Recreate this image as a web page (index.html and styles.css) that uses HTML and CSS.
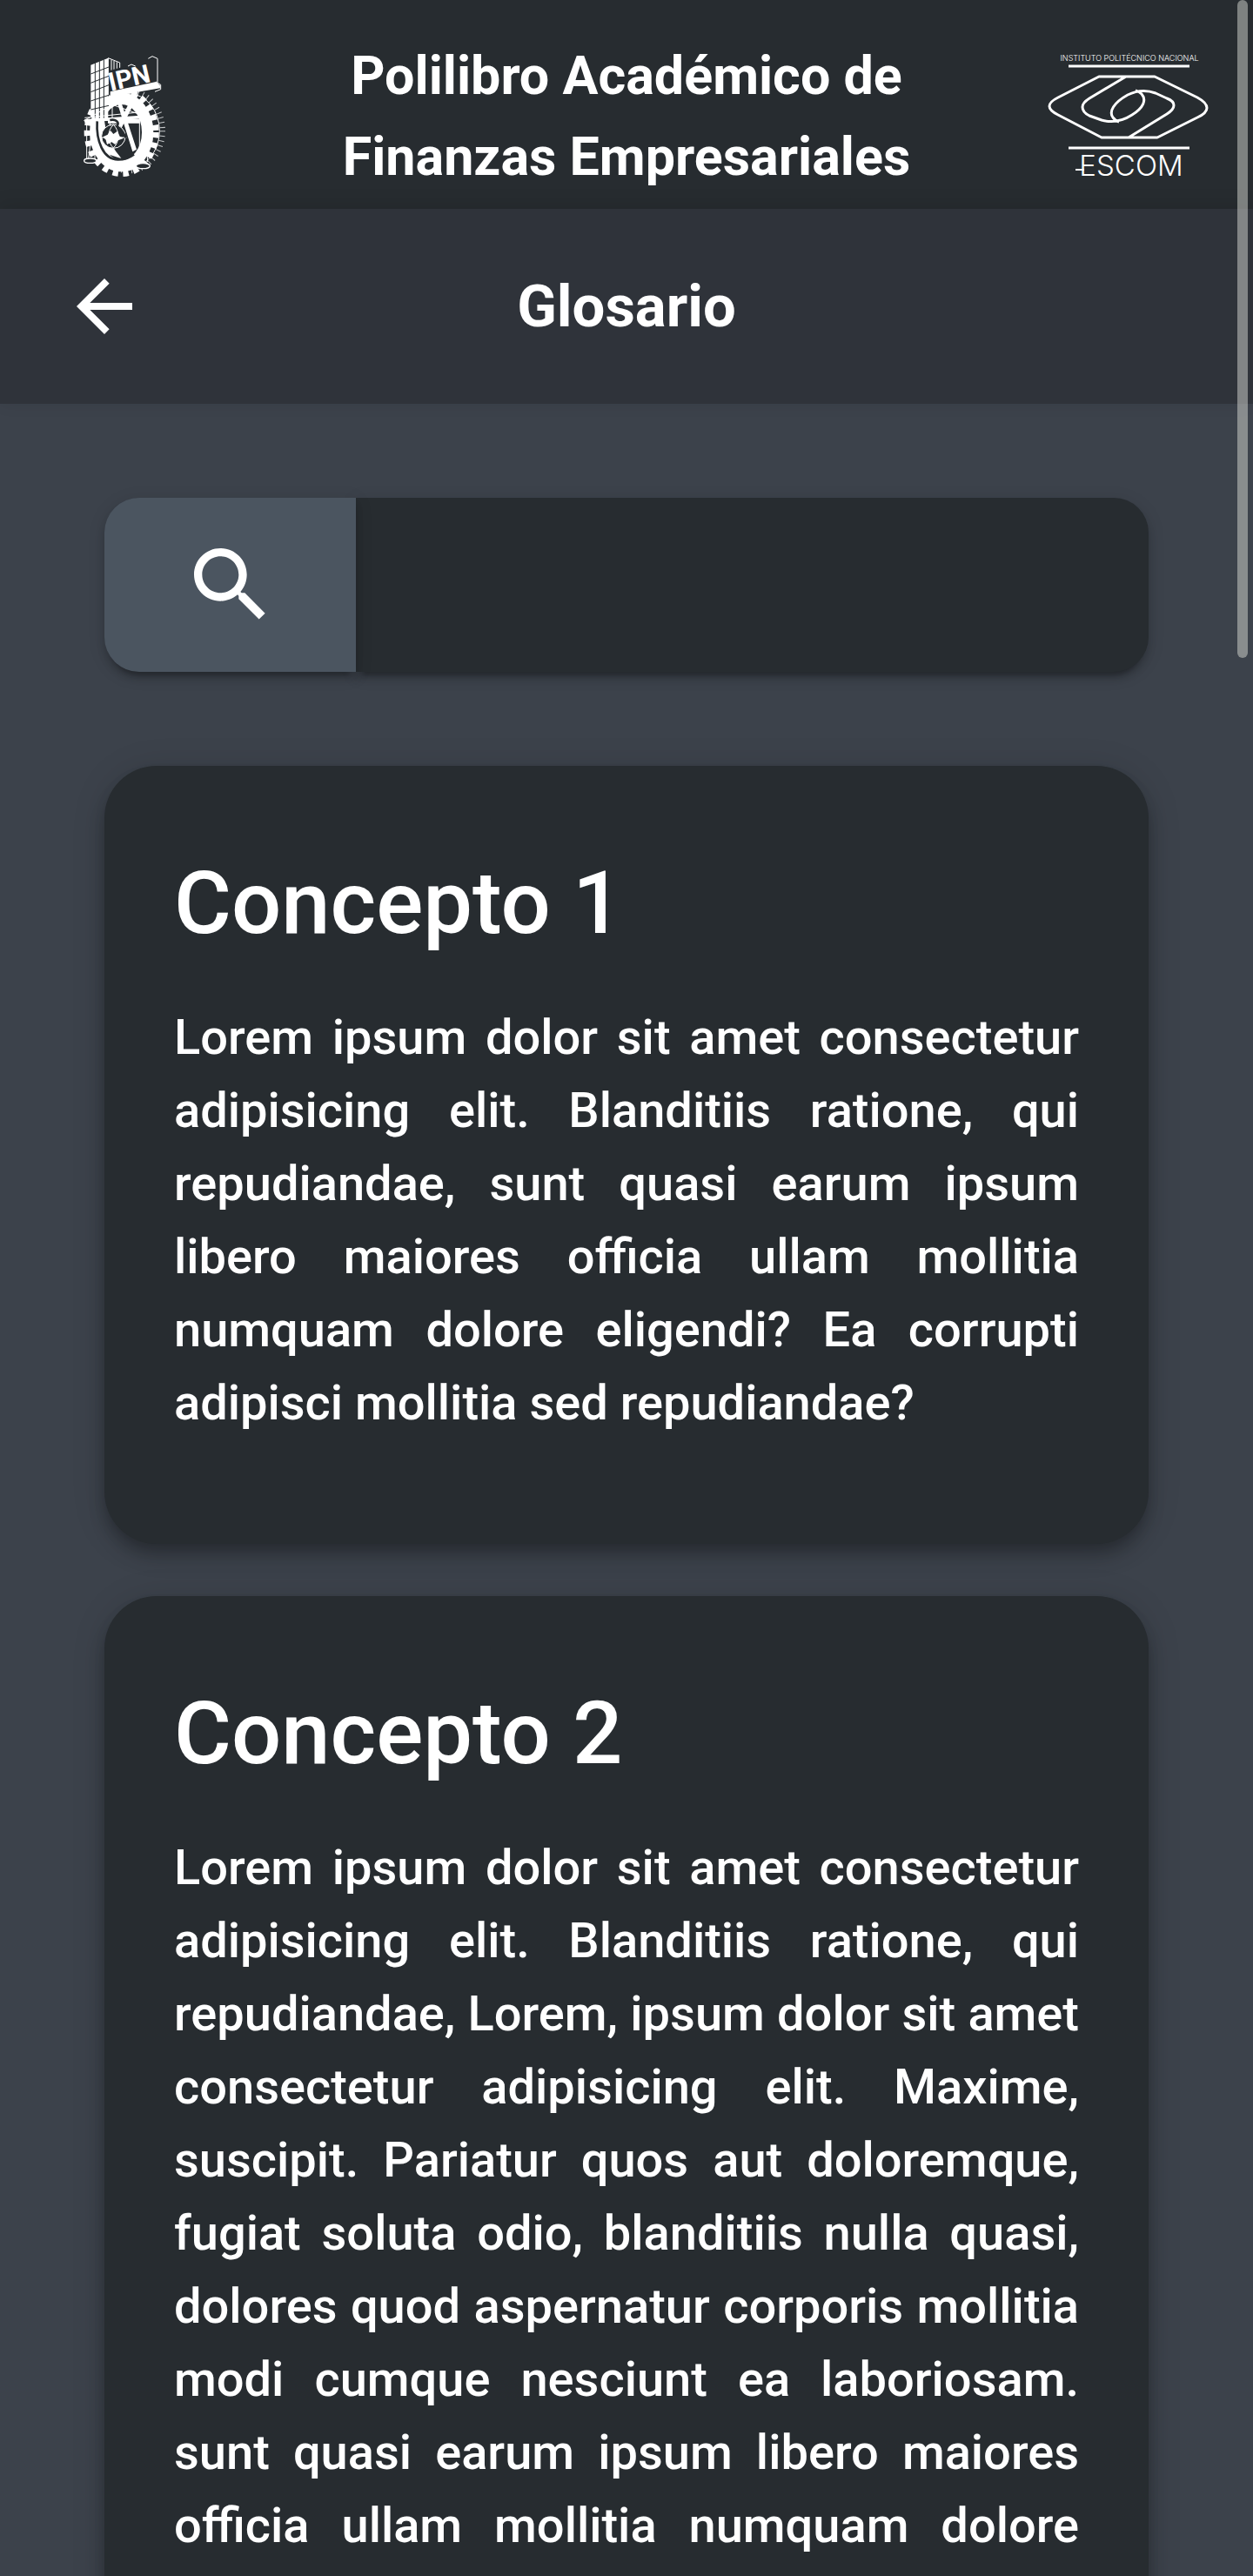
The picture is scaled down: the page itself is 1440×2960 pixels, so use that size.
FILE: index.html
```html
<!DOCTYPE html>
<html lang="es">
<head>
<meta charset="utf-8">
<meta name="viewport" content="width=device-width, initial-scale=1">
<title>Glosario</title>
<link rel="stylesheet" href="styles.css">
</head>
<body>
<div class="app">
  <header class="header">
    <svg class="logo-ipn" viewBox="0 0 390 492" role="img" aria-label="IPN">
      <!-- gear -->
      <ellipse cx="207" cy="295" rx="106" ry="128" class="gear-side"/>
      <ellipse cx="207" cy="295" rx="116" ry="137" class="teeth-side"/>
      <ellipse cx="182" cy="300" rx="90" ry="116" class="gear"/>
      <ellipse cx="182" cy="300" rx="118" ry="142" class="teeth"/>
      <path class="fill" d="M160 175l12-6 62 190-14 8zM226 165l14 6-66 130-12-14zM135 255h110v14H135z"/>
      <path class="fill" d="M92 255h30l10 60 30 50 20 26-60-20z"/>
      <!-- building -->
      <path class="fill" d="M76 68l60-24v210l-60-8z"/>
      <path class="line" d="M136 44l40 16v28M147 50v42M156 54v36M166 58v30M136 44v130"/>
      <path class="cut" d="M91 60v190M106 55v196M121 50v204M76 99l62-24M76 130l62-24M76 161l62-24M76 192l62-20M76 222l62-14"/>
      <!-- lettering on its base -->
      <path class="back-fill" d="M139 88l165-46v84l-165 36z"/>
      <path class="fill" d="M143 160l158-34 14 12v10l-172 30z"/>
      <path class="line" d="M301 126l16 10v16l-20 8M274 46l14-8 18 8v82M204 72l12-6 14 6"/>
      <text class="ipn" x="145" y="158" transform="rotate(-13 145 158)">IPN</text>
      <!-- scales -->
      <path class="line" d="M52 260L150 205l120 42M55 250l215-22M55 262l217-12M84 262l-16 130M90 262v132M62 264v128M244 250v158M262 246l10 156M150 170v90M146 180h14M146 190h14M146 200h14"/>
      <path class="fill" d="M55 255l215-14v10L55 266z"/>
      <ellipse class="pan" cx="74" cy="398" rx="21" ry="8"/>
      <ellipse class="pan" cx="256" cy="416" rx="24" ry="9"/>
      <!-- flask and snake -->
      <circle class="flask" cx="154" cy="314" r="41"/>
      <path class="line" d="M142 262v16M166 262v16M110 318h90M154 274c-22 20-22 60 0 80M154 274c22 20 22 60 0 80"/>
      <path class="fill" d="M118 316l16-8 10-14 10 12 14-10 8 18 14 6-20 8-10 14-12-8-16 8-4-16z"/>
      <path class="snake" d="M98 262c-4 66 20 132 72 132 20 0 38-5 55-18M142 258c20-4 32 6 26 18-6 16 30 24 28 44"/>
    </svg>
    <h1 class="title">Polilibro Académico de Finanzas Empresariales</h1>
    <svg class="logo-escom" viewBox="0 0 186 154" role="img" aria-label="ESCOM">
      <text class="escom-small" x="95" y="13">INSTITUTO POLITÉCNICO NACIONAL</text>
      <path class="rule" d="M25 19h139M25 113h139"/>
      <path class="eye" d="M60 31H124L173 55Q184 61 184 67Q184 73 173 78L127 101H63L13 75Q3 70 3 65Q3 60 13 55ZM91 31L49 56Q41 61 41 66Q41 72 49 76L63 81Q81 86 98 75C111 67 115 58 109 51Q106 48 102 47M94 101L138 74Q146 69 146 64Q146 59 138 56L125 50Q109 44 93 52C77 61 71 71 76 78Q79 82 83 83"/>
      <path class="rule-thin" d="M33 138h10"/>
      <text class="escom" x="97" y="145">ESCOM</text>
    </svg>
  </header>

  <nav class="bar">
    <a class="back" href="#inicio" aria-label="Regresar">
      <svg class="back-icon" viewBox="0 0 24 24"><path d="M20 11H7.830l5.590-5.590L12 4l-8 8 8 8 1.410-1.410L7.830 13H20z"/></svg>
    </a>
    <h2 class="bar-title">Glosario</h2>
  </nav>

  <main class="content">
    <form class="search" role="search">
      <button class="search-button" type="button" aria-label="Buscar">
        <svg class="search-icon" viewBox="0 0 24 24"><path d="M15.500 14h-.79l-.28-.27C15.410 12.590 16 11.110 16 9.500 16 5.910 13.090 3 9.500 3S3 5.910 3 9.500 5.910 16 9.500 16c1.610 0 3.090-.59 4.230-1.570l.27.28v.79l5 4.990L20.490 19zm-6 0C7.010 14 5 11.990 5 9.500S7.010 5 9.500 5 14 7.010 14 9.500 11.990 14 9.500 14"/></svg>
      </button>
      <input class="search-input" type="text" aria-label="Buscar concepto">
    </form>

    <article class="card">
      <h3 class="card-title">Concepto 1</h3>
      <p class="card-text">Lorem ipsum dolor sit amet consectetur adipisicing elit. Blanditiis ratione, qui repudiandae, sunt quasi earum ipsum libero maiores officia ullam mollitia numquam dolore eligendi? Ea corrupti adipisci mollitia sed repudiandae?</p>
    </article>

    <article class="card">
      <h3 class="card-title">Concepto 2</h3>
      <p class="card-text">Lorem ipsum dolor sit amet consectetur adipisicing elit. Blanditiis ratione, qui repudiandae, Lorem, ipsum dolor sit amet consectetur adipisicing elit. Maxime, suscipit. Pariatur quos aut doloremque, fugiat soluta odio, blanditiis nulla quasi, dolores quod aspernatur corporis mollitia modi cumque nesciunt ea laboriosam. sunt quasi earum ipsum libero maiores officia ullam mollitia numquam dolore eligendi? Ea corrupti adipisci mollitia sed repudiandae?</p>
    </article>
  </main>
</div>
<div class="scroll-thumb"></div>
</body>
</html>
```
FILE: styles.css
```css
* { box-sizing: border-box; }

body {
  margin: 0;
  background: #3c424b;
  color: #fff;
  font-family: Roboto, sans-serif;
}

h1, h2, h3, p { margin: 0; }

.app {
  height: 100vh;
  overflow-y: auto;
  scrollbar-width: none;
}

.header {
  display: grid;
  grid-template-columns: 1fr 3fr 1fr;
  align-items: center;
  justify-items: center;
  min-height: 240px;
  padding-top: 27px;
  background: #272c30;
}

.title {
  font-size: 61px;
  line-height: 93px;
  font-weight: 700;
  text-align: center;
}

.logo-ipn { width: 130px; height: 164px; }
.logo-escom { width: 186px; height: 154px; }

.fill { fill: #fff; }
.back-fill { fill: #272c30; }
.line { fill: none; stroke: #fff; stroke-width: 3; }
.cut { fill: none; stroke: #272c30; stroke-width: 3; }
.gear { fill: none; stroke: #fff; stroke-width: 40; }
.teeth { fill: none; stroke: #fff; stroke-width: 22; stroke-dasharray: 19 17; }
.gear-side { fill: none; stroke: #fff; stroke-width: 3; }
.teeth-side { fill: none; stroke: #c4c6c8; stroke-width: 20; stroke-dasharray: 3 14; }
.pan { fill: #272c30; stroke: #fff; stroke-width: 4; }
.flask { fill: #272c30; stroke: #fff; stroke-width: 3; }
.snake { fill: none; stroke: #272c30; stroke-width: 8; }
.ipn {
  fill: #fff;
  font: 700 88px Roboto, sans-serif;
}

.rule { stroke: #fff; stroke-width: 3; }
.rule-thin { stroke: #fff; stroke-width: 2; }
.eye { fill: none; stroke: #fff; stroke-width: 3; stroke-linejoin: round; }
.escom-small {
  fill: #fff;
  font: 300 9px Inter, sans-serif;
  text-anchor: middle;
}
.escom {
  fill: #fff;
  font: 300 33px Inter, sans-serif;
  text-anchor: middle;
}

.bar {
  display: grid;
  grid-template-columns: 1fr 4fr 1fr;
  align-items: center;
  justify-items: center;
  min-height: 224px;
  background: #2f333a;
  box-shadow: 0 -4px 20px rgba(0, 0, 0, .12);
}

.back { display: flex; }
.back-icon { width: 96px; height: 96px; fill: #fff; }

.bar-title {
  font-size: 67px;
  line-height: 100px;
  font-weight: 700;
}

.content {
  display: flex;
  flex-direction: column;
  gap: 60px;
  padding: 108px 120px;
}

.search {
  display: flex;
  height: 200px;
  margin-bottom: 48px;
}

.search-button,
.search-input {
  border: 0;
  box-shadow: 0 12px 4px -8px rgba(0, 0, 0, .2), 0 8px 8px rgba(0, 0, 0, .14), 0 4px 20px rgba(0, 0, 0, .12);
}

.search-button {
  position: relative;
  display: flex;
  align-items: center;
  justify-content: center;
  width: 289px;
  padding: 0;
  background: #4b5560;
  border-radius: 40px 0 0 40px;
}

.search-icon { width: 112px; height: 112px; fill: #fff; }

.search-input {
  flex: 1;
  min-width: 0;
  padding: 0 48px;
  background: #272c30;
  border-radius: 0 40px 40px 0;
  color: #fff;
  font: 500 56px Roboto, sans-serif;
}

.card {
  padding: 80px;
  background: #272c30;
  border-radius: 60px;
  box-shadow: 0 8px 16px -4px rgba(0, 0, 0, .2), 0 16px 20px rgba(0, 0, 0, .14), 0 4px 40px rgba(0, 0, 0, .12);
}

.card-title {
  margin-bottom: 34px;
  font-size: 101px;
  line-height: 156px;
  font-weight: 500;
}

.card-text {
  margin-bottom: 40px;
  font-size: 56px;
  line-height: 84px;
  font-weight: 500;
  text-align: justify;
}

.scroll-thumb {
  position: fixed;
  top: 0;
  right: 6px;
  width: 12px;
  height: 756px;
  border-radius: 6px;
  background: rgba(214, 216, 210, .5);
}
```
